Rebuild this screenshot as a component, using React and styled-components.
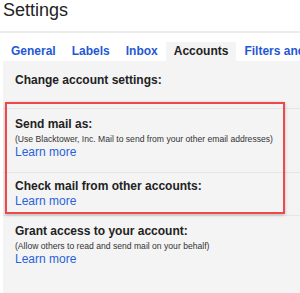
import React from "react";
import styled, { createGlobalStyle } from "styled-components";

const GlobalStyle = createGlobalStyle`
  html, body {
    margin: 0;
    padding: 0;
    background: #ffffff;
  }
  body {
    font-family: "Liberation Sans", Arial, sans-serif;
    color: #222222;
  }
`;

const Page = styled.div`
  position: relative;
  width: 300px;
  height: 293px;
  overflow: hidden;
  background: #ffffff;
`;

const Header = styled.div`
  height: 31px;
  border-bottom: 2px solid #ececec;
`;

const Title = styled.h1`
  margin: 0;
  padding: 0 3px;
  font-size: 18px;
  line-height: 20px;
  font-weight: normal;
  color: #222222;
`;

const Tabs = styled.nav`
  display: flex;
  margin-top: 9px;
  padding-left: 3px;
  white-space: nowrap;
`;

const Tab = styled.span`
  flex: none;
  padding: 0 8px;
  height: 19px;
  line-height: 19px;
  font-size: 12px;
  font-weight: bold;
  color: ${(p) => (p.$active ? "#222222" : "#1f58d6")};
  background: ${(p) => (p.$active ? "#f4f4f4" : "transparent")};
`;

const Panel = styled.section`
  margin-left: 3px;
  height: 232px;
  background: #f4f4f4;
  display: flex;
  flex-direction: column;
`;

const Row = styled.div`
  display: flex;
  flex-direction: column;
  padding: ${(p) => p.$top}px 12px ${(p) => p.$bottom}px;
  border-bottom: ${(p) => (p.$last ? "none" : "1px solid #e6e6e6")};
`;

const Heading = styled.div`
  font-size: 12px;
  line-height: 14px;
  font-weight: bold;
  color: #222222;
`;

const Desc = styled.div`
  margin-top: 1px;
  font-size: 8.6px;
  line-height: 14px;
  color: #333333;
  white-space: nowrap;
`;

const Link = styled.a`
  margin-top: ${(p) => p.$mt}px;
  font-size: 12px;
  line-height: 14px;
  color: #2a62da;
  text-decoration: none;
  cursor: pointer;
`;

const Highlight = styled.div`
  position: absolute;
  left: 5px;
  top: 102px;
  width: 280px;
  height: 112px;
  box-sizing: border-box;
  border: 2px solid #f0474a;
  box-shadow: 0 1px 3px rgba(0, 0, 0, 0.25);
  pointer-events: none;
`;

export default function App() {
  return (
    <>
      <GlobalStyle />
      <Page>
        <Header>
          <Title>Settings</Title>
        </Header>
        <Tabs>
          <Tab>General</Tab>
          <Tab>Labels</Tab>
          <Tab>Inbox</Tab>
          <Tab $active>Accounts</Tab>
          <Tab>Filters and Blocked Addresses</Tab>
        </Tabs>
        <Panel>
          <Row $top={12} $bottom={21}>
            <Heading>Change account settings:</Heading>
          </Row>
          <Row $top={8} $bottom={13}>
            <Heading>Send mail as:</Heading>
            <Desc>(Use Blacktower, Inc. Mail to send from your other email addresses)</Desc>
            <Link $mt={-1}>Learn more</Link>
          </Row>
          <Row $top={6} $bottom={7}>
            <Heading>Check mail from other accounts:</Heading>
            <Link $mt={1}>Learn more</Link>
          </Row>
          <Row $top={8} $bottom={0} $last>
            <Heading>Grant access to your account:</Heading>
            <Desc>(Allow others to read and send mail on your behalf)</Desc>
            <Link $mt={-1}>Learn more</Link>
          </Row>
        </Panel>
        <Highlight />
      </Page>
    </>
  );
}
